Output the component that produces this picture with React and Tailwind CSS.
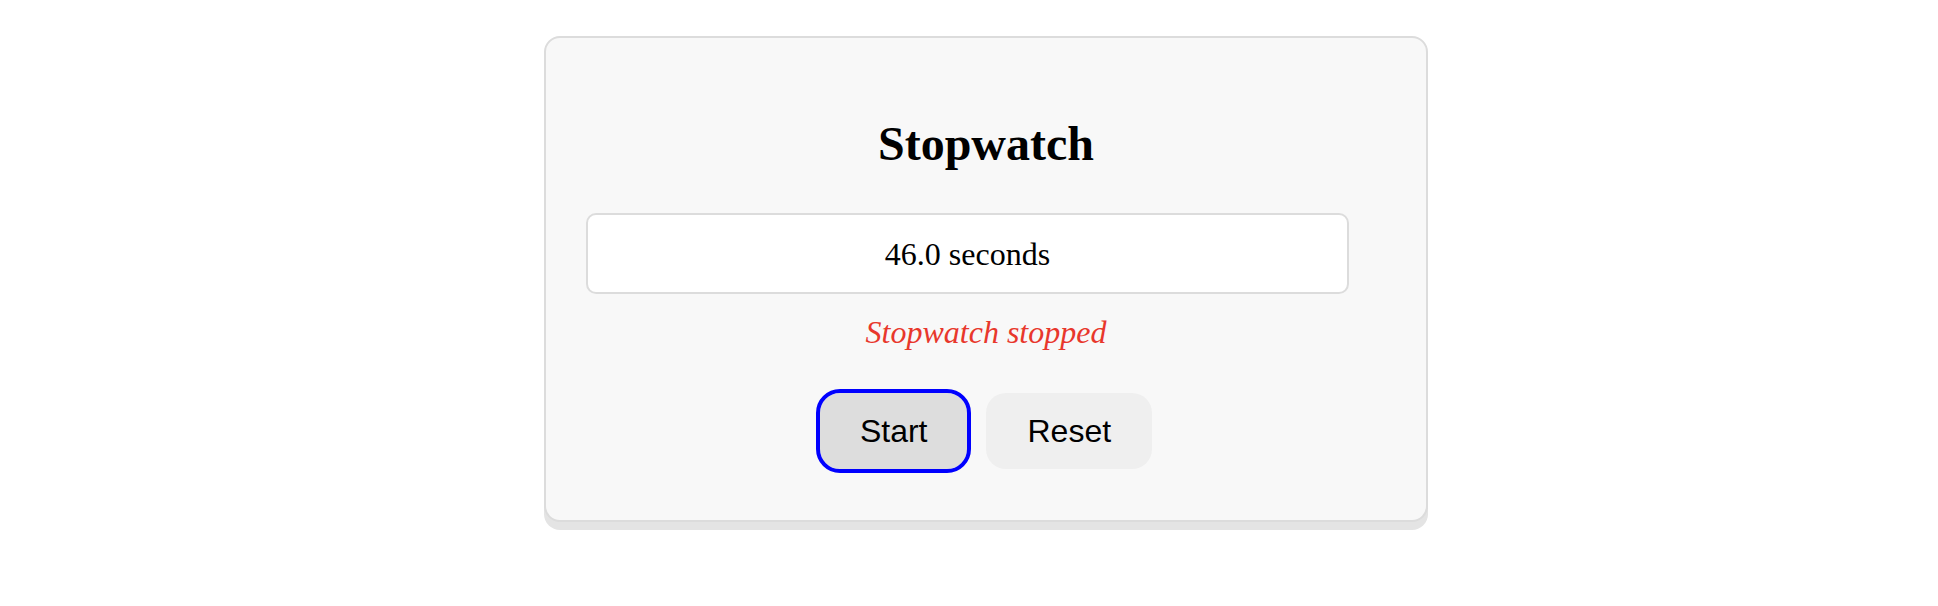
export default function App() {
  return (
    <div className="min-h-screen bg-white pt-[36px] pl-[34px] flex justify-center items-start">
      <div className="w-[884px] border-2 border-[#dcdcdc] rounded-[16px] bg-[#f8f8f8] shadow-[0_8px_0_#e4e4e4] pt-[79px] pb-[51px] flex flex-col">
        <h1 className="text-center font-['Liberation_Serif',serif] font-bold text-[48px] leading-[53px] text-black mb-[43px]">
          Stopwatch
        </h1>
        <div className="ml-[40px] w-[763px] h-[81px] border-2 border-[#dcdcdc] rounded-[10px] bg-white flex items-center justify-center font-['Liberation_Serif',serif] text-[32px] text-black">
          46.0 seconds
        </div>
        <p className="mt-[21px] text-center font-['Liberation_Serif',serif] italic text-[32px] leading-[35px] text-[#e8372c]">
          Stopwatch stopped
        </p>
        <div className="mt-[43px] flex justify-center gap-[19px] font-['Liberation_Sans',Arial,sans-serif] text-[32px] text-black">
          <button className="h-[76px] px-[40px] rounded-[20px] bg-[#dddddd] outline-solid outline-[4px] outline-[#0000ff]">
            Start
          </button>
          <button className="h-[76px] px-[41px] rounded-[20px] bg-[#efefef]">
            Reset
          </button>
        </div>
      </div>
    </div>
  );
}
